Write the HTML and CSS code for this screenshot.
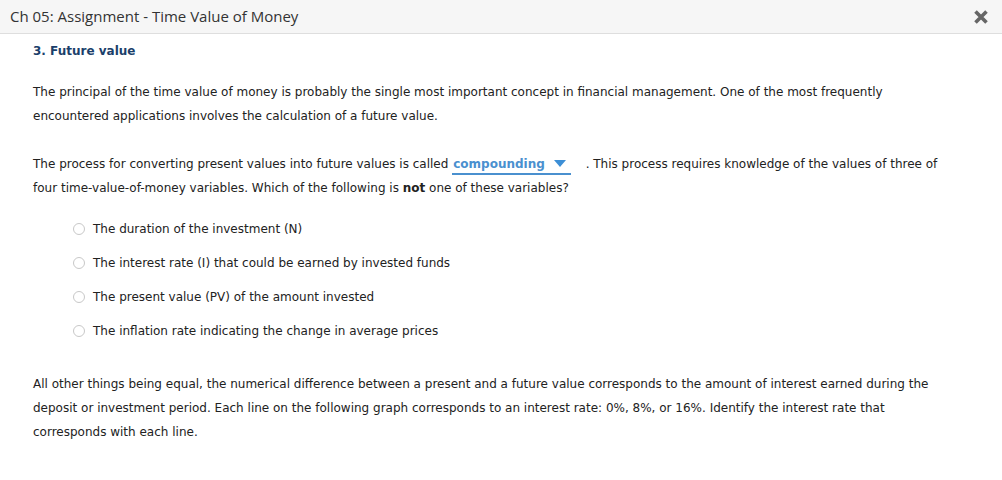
FILE: index.html
```html
<!DOCTYPE html>
<html>
<head>
<meta charset="utf-8">
<link rel="stylesheet" href="styles.css">
</head>
<body>
<div class="header">
  <div class="title">Ch 05: Assignment - Time Value of Money</div>
  <div class="close"><svg width="16" height="16" viewBox="0 0 16 16"><path d="M2.5 2.5 L13.5 13.5 M13.5 2.5 L2.5 13.5" stroke="#666" stroke-width="3.6" stroke-linecap="butt"/></svg></div>
</div>
<div class="content">
  <h2 class="qtitle">3. Future value</h2>
  <p class="para p1">The principal of the time value of money is probably the single most important concept in financial management. One of the most frequently encountered applications involves the calculation of a future value.</p>
  <p class="para p2">The process for converting present values into future values is called <span class="dropdown"><span class="dd-text">compounding</span><svg class="dd-arrow" width="12" height="8" viewBox="0 0 12 8"><path d="M0 0 L12 0 L6 7 Z" fill="#3d8fd6"/></svg></span> . This process requires knowledge of the values of three of four time-value-of-money variables. Which of the following is <b>not</b> one of these variables?</p>
  <ul class="options">
    <li class="option"><span class="radio"></span>The duration of the investment (N)</li>
    <li class="option"><span class="radio"></span>The interest rate (I) that could be earned by invested funds</li>
    <li class="option"><span class="radio"></span>The present value (PV) of the amount invested</li>
    <li class="option"><span class="radio"></span>The inflation rate indicating the change in average prices</li>
  </ul>
  <p class="para p3">All other things being equal, the numerical difference between a present and a future value corresponds to the amount of interest earned during the deposit or investment period. Each line on the following graph corresponds to an interest rate: 0%, 8%, or 16%. Identify the interest rate that corresponds with each line.</p>
</div>
</body>
</html>
```
FILE: styles.css
```css
body {
  margin: 0;
  font-family: "DejaVu Sans", Verdana, sans-serif;
  font-size: 12px;
  color: #222;
  background: #fff;
}
.header {
  height: 33px;
  background: #f6f6f6;
  border-bottom: 1px solid #dedede;
  display: flex;
  align-items: center;
  justify-content: space-between;
  padding: 0 13px 0 10px;
}
.title {
  font-family: "Open Sans", sans-serif;
  font-size: 15px;
  color: #333;
  margin-top: -1px;
}
.close {
  display: flex;
  align-items: center;
}
.content {
  padding: 0 52px 0 33px;
}
.qtitle {
  margin: 5px 0 0;
  font-size: 12px;
  line-height: 24px;
  color: #1b3f6b;
  font-weight: bold;
}
.para {
  margin: 0;
  line-height: 24px;
}
.p1 { margin-top: 17px; }
.p2 { margin-top: 24px; }
.p3 { margin-top: 29px; }
.dropdown {
  display: inline-flex;
  align-items: center;
  gap: 9px;
  padding: 0 5px 0 1px;
  margin-right: 11px;
  border-bottom: 2px solid #4a90cf;
  line-height: 18px;
  color: #4a90cf;
  font-weight: bold;
}
.dd-arrow { display: block; }
.options {
  list-style: none;
  margin: 17px 0 0;
  padding: 0 0 0 40px;
}
.option {
  display: flex;
  align-items: center;
  line-height: 24px;
  margin-bottom: 10px;
}
.option:last-child { margin-bottom: 0; }
.radio {
  width: 12px;
  height: 12px;
  border: 1px solid #c8c8c8;
  border-radius: 50%;
  margin-right: 8px;
  box-sizing: border-box;
}
```
